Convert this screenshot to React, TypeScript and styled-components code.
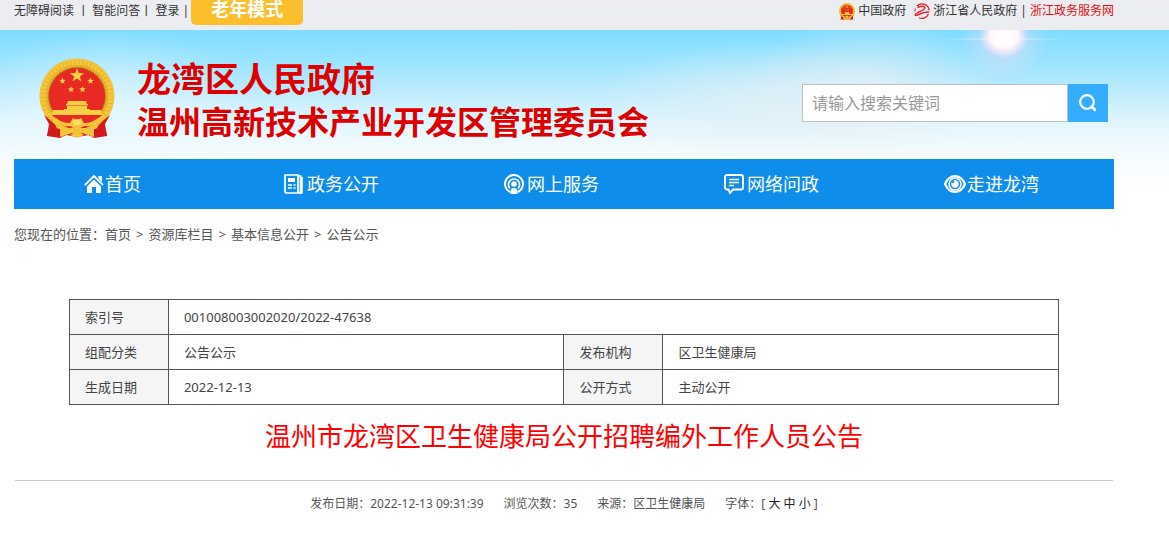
import React from "react";
import styled, { createGlobalStyle } from "styled-components";

const GlobalStyle = createGlobalStyle`
  *, *::before, *::after { box-sizing: border-box; }
  body {
    margin: 0;
    background: #fff;
    color: #444;
    font-family: "Noto Sans", "Noto Sans CJK SC", sans-serif;
    font-size: 13px;
  }
  a { color: inherit; text-decoration: none; }
`;

const Container = styled.div`
  max-width: 1100px;
  margin-left: 14px;
`;

const TopBar = styled.div`
  height: 30px;
  background: #ecedf1;
  font-size: 12px;
  line-height: 22px;
  color: #333;
`;

const TopRow = styled(Container)`
  display: flex;
  justify-content: space-between;
`;

const TopLinks = styled.div`
  display: flex;
  white-space: pre;
`;

const SiteLink = styled.a<{ $accent?: boolean }>`
  display: flex;
  align-items: center;
  height: 22px;
  gap: 3px;
  color: ${(p) => (p.$accent ? "#dd1111" : "inherit")};
`;

const SiteLinks = styled(TopLinks)`
  gap: 8px;
`;

const LinkPair = styled.div`
  display: flex;
  gap: 3px;
`;

const ElderButton = styled.button`
  width: 112px;
  height: 25px;
  margin-left: 2px;
  padding: 0 0 9px;
  border: 0;
  border-radius: 0 0 5px 5px;
  background: #fbbe2d;
  color: #fff;
  font: bold 18px/16px "Noto Sans CJK SC", sans-serif;
`;

const Sky = styled.div`
  background:
    radial-gradient(70px 1px at 1003px 9px, rgba(255, 255, 255, 0.7), transparent),
    radial-gradient(24px 22px at 1004px 6px, #fff 0, #fff8fb 55%, rgba(252, 232, 246, 0.7) 75%, transparent 100%),
    radial-gradient(44px 42px at 1004px 10px, rgba(236, 220, 244, 0.7), transparent),
    radial-gradient(130px 70px at 870px 62px, rgba(233, 240, 244, 0.8), transparent),
    radial-gradient(170px 60px at 760px 72px, rgba(226, 240, 246, 0.8), transparent),
    radial-gradient(150px 80px at 110px 80px, rgba(235, 249, 255, 0.7), transparent),
    linear-gradient(#80dcff 0, #97e3ff 28px, #bdebfd 62px, #dff5fd 90px, #f4fbfe 120px, #fff 165px);
`;

const Header = styled.header`
  display: flex;
  justify-content: space-between;
  align-items: flex-start;
  height: 129px;
  padding: 28px 6px 0 25px;
`;

const Brand = styled.a`
  display: flex;
  gap: 22px;
`;

const BrandName = styled.h1`
  display: flex;
  flex-direction: column;
  margin: -2px 0 0;
  color: #dc0000;
  font: bold 32px/43px "Noto Sans CJK SC", sans-serif;
  white-space: nowrap;
`;

const District = styled.span`
  font-size: 34px;
`;

const SearchForm = styled.form`
  display: flex;
  width: 306px;
  height: 38px;
  margin-top: 26px;
`;

const SearchInput = styled.input`
  flex: 1;
  min-width: 0;
  padding: 0 9px;
  border: 1px solid #c0c0c0;
  border-radius: 0;
  background: #fff;
  font: 16px "Noto Sans", "Noto Sans CJK SC", sans-serif;
  &::placeholder { color: #999; opacity: 1; }
`;

const SearchButton = styled.button`
  display: flex;
  align-items: center;
  justify-content: center;
  width: 40px;
  padding: 0;
  border: 0;
  background: #35acff;
`;

const Nav = styled.nav`
  display: grid;
  grid-template-columns: 10fr 11fr 11fr 11fr 12fr;
  height: 50px;
  background: #0e8eea;
`;

const NavLink = styled.a`
  display: flex;
  align-items: center;
  gap: 1px;
  padding-left: 70px;
  color: #fff;
  font-size: 18px;
  line-height: 50px;
  white-space: nowrap;
`;

const Breadcrumb = styled.nav`
  display: flex;
  height: 50px;
  line-height: 50px;
  color: #555;
  white-space: nowrap;
`;

const Separator = styled.span`
  padding: 0 5px;
`;

const Article = styled.main`
  padding-top: 40px;
`;

const InfoTable = styled.table`
  width: 90%;
  margin: 0 auto;
  border-collapse: collapse;
  table-layout: fixed;
  line-height: 20px;
`;

const cell = `
  height: 35px;
  padding: 0 15px;
  border: 1px solid #555;
  text-align: left;
  font-weight: normal;
`;

const Label = styled.th`
  ${cell}
  background: #f5f5f5;
`;

const Value = styled.td`
  ${cell}
`;

const LabelCol = styled.col`
  width: 10%;
`;

const ValueCol = styled.col`
  width: 40%;
`;

const Title = styled.h2`
  margin: 0 1px;
  padding-bottom: 13px;
  border-bottom: 1px solid #ccc;
  color: #f00;
  font-size: 26px;
  font-weight: normal;
  line-height: 62px;
  text-align: center;
`;

const Meta = styled.div`
  display: flex;
  justify-content: center;
  gap: 20px;
  font-size: 12px;
  line-height: 45px;
  color: #555;
`;

const SizeButton = styled.button`
  padding: 0;
  border: 0;
  background: none;
  color: #222;
  font: inherit;
`;

const star = (cx: number, cy: number, r: number) =>
  Array.from({ length: 10 }, (_, i) => {
    const a = (Math.PI / 5) * i - Math.PI / 2;
    const k = i % 2 ? r * 0.4 : r;
    return `${cx + k * Math.cos(a)},${cy + k * Math.sin(a)}`;
  }).join(" ");

function Emblem({ width, height }: { width: number; height: number }) {
  return (
    <svg width={width} height={height} viewBox="0 0 76 81" aria-hidden="true">
      <path d="M10 56 L11 66 L8 78 L15 76 L21 80 L27 77 L38 79 L50 77 L55 80 L61 76 L68 78 L65 66 L66 56Z" fill="#cf171b" />
      <path d="M16 64l-2 12M60 64l2 12M29 68l-4 10M47 68l4 10" stroke="#8e0d10" strokeWidth="1.5" />
      <circle cx="38" cy="38" r="37.5" fill="#e9b12a" />
      <circle cx="38" cy="38" r="33.5" fill="none" stroke="#f3c83f" strokeWidth="4" strokeDasharray="3 1" />
      <circle cx="38" cy="38" r="36.5" fill="none" stroke="#f5c93c" strokeWidth="1.5" />
      <circle cx="38" cy="38" r="29" fill="#b87d18" />
      <circle cx="38" cy="38" r="28" fill="#e72a24" />
      <g fill="#f7cf45">
        <polygon points={star(38, 17.5, 7.5)} />
        <polygon points={star(23.5, 23, 3.5)} />
        <polygon points={star(51.5, 23, 3.5)} />
        <polygon points={star(32, 31.5, 3.5)} />
        <polygon points={star(43.5, 31.5, 3.5)} />
        <path d="M29 43h18l1 3H28zM27 46h22v1.500H27zM28 48h20v3H28zM25 51h26v2H25zM14 52h48l1 5H13z" />
      </g>
      <path d="M13 57h50l-4 7-12 6H29l-12-6z" fill="#e72a24" />
      <path d="M5 57 Q14 64 17 68 L21 80 L8 78 L10 66Z M71 57 Q62 64 59 68 L55 80 L68 78 L66 66Z" fill="#d41a1d" />
      <path d="M10 55 Q23 66 31 65 L34 60 L38 62 L42 60 L45 65 Q53 66 66 55 L61 64 Q52 69 45 68 L38 72 L31 68 Q24 69 15 64Z" fill="#f3c43a" />
      <path d="M21 71l-4-1 4-2 8 2 4 5-6 2-6 2zM55 71l4-1-4-2-8 2-4 5 6 2 6 2zM31 77l7-4 7 4-7 3z" fill="#f3c43a" />
      <path d="M33 63l5-2 5 2-2 4h-6z" fill="#f9dc68" />
    </svg>
  );
}

const ZhejiangLogo = () => (
  <svg width="16" height="16" viewBox="0 0 16 16" fill="none" stroke="#e3222b" aria-hidden="true">
    <path d="M3 3A7.200 7.200 0 0 1 15.200 7.500M14.500 11A7.200 7.200 0 0 1 5 14.700" strokeWidth="1.200" />
    <path d="M3.500 4.500C6 3.500 10 2.800 10.800 4.500 11.500 6.300 7.500 7.800 4.500 9.200 2.500 10.200.8 11 1.200 12c.6 1 3.500-.5 6-1.500s5.500-1.800 7.800-1.300" strokeWidth="1.500" />
    <path d="M.8 8.500C.8 7.500 1 6.500 1.500 5.500" strokeWidth="1" />
  </svg>
);

const SearchIcon = () => (
  <svg width="18" height="18" viewBox="0 0 18 18" fill="none" stroke="#fff" aria-hidden="true">
    <circle cx="8" cy="8" r="6.800" strokeWidth="2.200" />
    <path d="M12.800 12.800l3 3" strokeWidth="3" strokeLinecap="round" />
  </svg>
);

const HomeIcon = () => (
  <svg width="20" height="20" viewBox="0 0 20 20" fill="#fff" aria-hidden="true">
    <path d="M14.500 2h3.500v6l-3.500-3.500z" />
    <path d="M.8 11.200L10 2l9.200 9.200" fill="none" stroke="#fff" strokeWidth="1.900" />
    <path d="M10 5.500l7 7V19h-5v-6H8v6H3v-6.500z" />
  </svg>
);

const NewsIcon = () => (
  <svg width="22" height="20" viewBox="0 0 22 20" fill="none" stroke="#fff" aria-hidden="true">
    <path d="M1 1h13v18H3a2 2 0 0 1-2-2zM14 2h2.500v15a1.700 1.700 0 0 1-2.500 1.500M16.500 3.500H18v14a1.500 1.500 0 0 1-3 1" strokeWidth="1.700" />
    <path d="M4 4h7v4H4z" fill="#fff" stroke="none" />
    <path d="M4 11h4M9.500 11h2M4 14h4M9.500 14h2" strokeWidth="1.300" />
  </svg>
);

const ServiceIcon = () => (
  <svg width="22" height="20" viewBox="0 0 22 20" fill="none" stroke="#fff" aria-hidden="true">
    <path d="M6 18A9 9 0 1 1 14 18" strokeWidth="2" />
    <path d="M6 14.500A5.600 5.600 0 1 1 14 14.500" strokeWidth="1.700" />
    <circle cx="10" cy="10" r="2.800" fill="#fff" stroke="none" />
    <path d="M6.500 20v-2.500q0-3.500 3.500-3.500t3.500 3.500V20z" fill="#fff" stroke="none" />
  </svg>
);

const ChatIcon = () => (
  <svg width="22" height="20" viewBox="0 0 22 20" fill="none" stroke="#fff" aria-hidden="true">
    <path d="M3 1h14a2 2 0 0 1 2 2v10.500a2 2 0 0 1-2 2H9L6 19l-1.500-3.500H3a2 2 0 0 1-2-2V3a2 2 0 0 1 2-2z" strokeWidth="1.900" />
    <path d="M5 5.500h10M5 8.500h10M5 11.500h5" strokeWidth="1.400" />
  </svg>
);

const EyeIcon = () => (
  <svg width="22" height="20" viewBox="0 0 22 20" fill="none" stroke="#fff" aria-hidden="true">
    <path d="M1 10C5.500-.5 16.500-.5 21 10 16.500 20.500 5.500 20.500 1 10z" strokeWidth="2.200" />
    <circle cx="11" cy="10" r="6" strokeWidth="1.500" />
    <circle cx="11" cy="10" r="3.700" fill="#fff" stroke="none" />
    <circle cx="9" cy="8" r="1.300" fill="#0e8eea" stroke="none" />
  </svg>
);

const navItems = [
  { label: "首页", Icon: HomeIcon },
  { label: "政务公开", Icon: NewsIcon },
  { label: "网上服务", Icon: ServiceIcon },
  { label: "网络问政", Icon: ChatIcon },
  { label: "走进龙湾", Icon: EyeIcon },
];

const crumbs = ["首页", "资源库栏目", "基本信息公开", "公告公示"];

export default function App() {
  return (
    <>
      <GlobalStyle />
      <TopBar>
        <TopRow>
          <TopLinks>
            <a href="#accessible">无障碍阅读</a>
            <span> 丨 </span>
            <a href="#qa">智能问答</a>
            <span>丨 </span>
            <a href="#login">登录</a>
            <span> |</span>
            <ElderButton type="button">老年模式</ElderButton>
          </TopLinks>
          <SiteLinks>
            <SiteLink href="#china">
              <Emblem width={16} height={17} />
              中国政府
            </SiteLink>
            <LinkPair>
              <SiteLink href="#zhejiang">
                <ZhejiangLogo />
                浙江省人民政府
              </SiteLink>
              <span>|</span>
              <SiteLink href="#service" $accent>
                浙江政务服务网
              </SiteLink>
            </LinkPair>
          </SiteLinks>
        </TopRow>
      </TopBar>

      <Sky>
        <Container>
          <Header>
            <Brand href="#home">
              <Emblem width={76} height={81} />
              <BrandName>
                <District>龙湾区人民政府</District>
                <span>温州高新技术产业开发区管理委员会</span>
              </BrandName>
            </Brand>
            <SearchForm role="search" onSubmit={(e) => e.preventDefault()}>
              <SearchInput type="text" aria-label="搜索" placeholder="请输入搜索关键词" />
              <SearchButton type="submit" aria-label="搜索">
                <SearchIcon />
              </SearchButton>
            </SearchForm>
          </Header>
          <Nav>
            {navItems.map(({ label, Icon }) => (
              <NavLink key={label} href={`#${label}`}>
                <Icon />
                {label}
              </NavLink>
            ))}
          </Nav>
        </Container>
      </Sky>

      <Container>
        <Breadcrumb>
          <span>您现在的位置：</span>
          {crumbs.map((c, i) => (
            <React.Fragment key={c}>
              {i > 0 && <Separator>&gt;</Separator>}
              <a href={`#${c}`}>{c}</a>
            </React.Fragment>
          ))}
        </Breadcrumb>
        <Article>
          <InfoTable>
            <colgroup>
              <LabelCol />
              <ValueCol />
              <LabelCol />
              <ValueCol />
            </colgroup>
            <tbody>
              <tr>
                <Label scope="row">索引号</Label>
                <Value colSpan={3}>001008003002020/2022-47638</Value>
              </tr>
              <tr>
                <Label scope="row">组配分类</Label>
                <Value>公告公示</Value>
                <Label scope="row">发布机构</Label>
                <Value>区卫生健康局</Value>
              </tr>
              <tr>
                <Label scope="row">生成日期</Label>
                <Value>2022-12-13</Value>
                <Label scope="row">公开方式</Label>
                <Value>主动公开</Value>
              </tr>
            </tbody>
          </InfoTable>
          <Title>温州市龙湾区卫生健康局公开招聘编外工作人员公告</Title>
          <Meta>
            <span>发布日期：2022-12-13 09:31:39</span>
            <span>浏览次数：35</span>
            <span>来源：区卫生健康局</span>
            <span>
              字体：[ <SizeButton type="button">大</SizeButton>{" "}
              <SizeButton type="button">中</SizeButton>{" "}
              <SizeButton type="button">小</SizeButton> ]
            </span>
          </Meta>
        </Article>
      </Container>
    </>
  );
}
